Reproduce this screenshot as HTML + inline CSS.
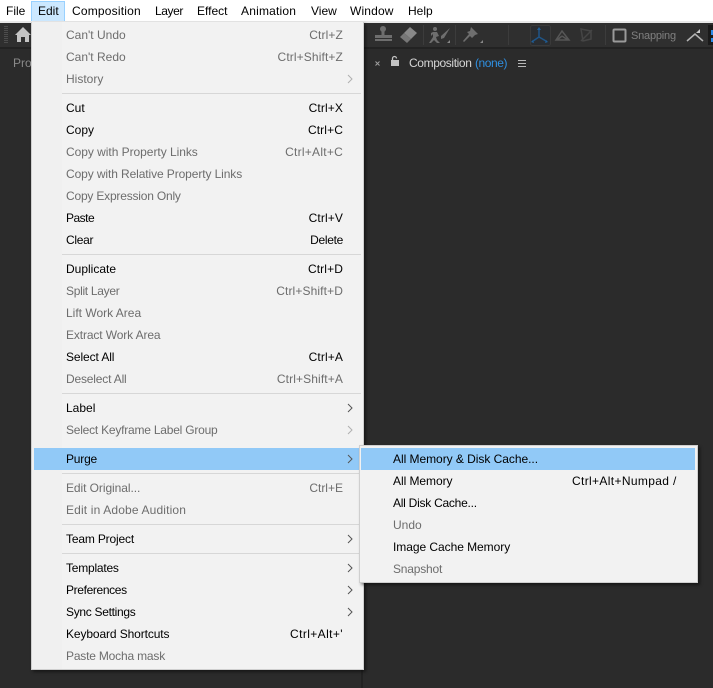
<!DOCTYPE html>
<html><head><meta charset="utf-8">
<style>
*{margin:0;padding:0;box-sizing:border-box}
html,body{width:713px;height:688px;overflow:hidden;background:#2b2b2b;font-family:"Liberation Sans",sans-serif;font-size:12px;color:#000}
.a{position:absolute}
.t{position:absolute;white-space:nowrap;line-height:22px;height:22px}
.r{position:absolute;white-space:nowrap;line-height:22px;height:22px;text-align:right;letter-spacing:.12px}
.d{color:#6d6d6d}
.m{position:absolute;top:0;line-height:22px;height:21px;white-space:nowrap;color:#000}
.sep{position:absolute;left:62px;width:299px;height:1px;background:#d7d7d7}
</style></head><body>
<div class="a" style="left:0;top:0;width:713px;height:21px;background:#fff"></div>
<div class="a" style="left:31px;top:1px;width:34px;height:21px;background:#cce8ff;border:1px solid #99d1ff"></div>
<div class="m" style="left:6px">File</div>
<div class="m" style="left:38px">Edit</div>
<div class="m" style="left:72px;letter-spacing:.2px">Composition</div>
<div class="m" style="left:155px;letter-spacing:-.4px">Layer</div>
<div class="m" style="left:197px">Effect</div>
<div class="m" style="left:241px;letter-spacing:.2px">Animation</div>
<div class="m" style="left:311px">View</div>
<div class="m" style="left:350px;letter-spacing:.15px">Window</div>
<div class="m" style="left:408px">Help</div>

<div class="a" style="left:0;top:21px;width:713px;height:2px;background:#e8e8e8"></div>
<div class="a" style="left:0;top:23px;width:713px;height:24px;background:#2f2f2f"></div>
<div class="a" style="left:0;top:47px;width:713px;height:2px;background:#222"></div>

<svg class="a" style="left:0;top:0" width="713" height="100">
<g fill="#4d4d4d"><rect x="4" y="26" width="4" height="1"/><rect x="4" y="28" width="4" height="1"/><rect x="4" y="30" width="4" height="1"/><rect x="4" y="32" width="4" height="1"/><rect x="4" y="34" width="4" height="1"/><rect x="4" y="36" width="4" height="1"/><rect x="4" y="38" width="4" height="1"/><rect x="4" y="40" width="4" height="1"/><rect x="4" y="42" width="4" height="1"/></g>
<path d="M15 35L23 27L31 35H29V42H25V37H21V42H17V35Z" fill="#c4c4c4"/>
<g fill="#6e6e6e">
<circle cx="383" cy="29" r="3"/>
<rect x="381.500" y="30" width="3" height="6"/>
<rect x="375" y="35" width="17" height="3"/>
<rect x="375" y="39" width="17" height="2"/>
<path d="M410 27L417 33L411 39L404 33Z" fill="#888"/>
<path d="M404 33L411 39L407 43L400 37Z" fill="#777"/>
<circle cx="435" cy="29" r="2"/>
<path d="M433 32L437 32L439 36L436 37L437 40L440 43H437L434 40L431 43H429L433 37V34L431 36V33Z"/>
<path d="M450 28L444 38L441 39L441 36Z"/>
<path d="M471 27L478 34L475 35L472 38L470 36L464 42L463 41L469 34L467 32L470 31Z"/>
<path d="M447 43h3v-3zM480 43h3v-3z" fill="#888"/>
</g>
<rect x="423" y="25" width="1" height="20" fill="#3c3c3c"/>
<rect x="455" y="25" width="1" height="20" fill="#3c3c3c"/>
<rect x="508" y="25" width="1" height="20" fill="#3c3c3c"/>
<rect x="605" y="25" width="1" height="20" fill="#3c3c3c"/>
<rect x="530.500" y="25.500" width="20" height="20" rx="2" fill="#2a2d31" stroke="#3a3a3a"/>
<g stroke="#1f5588" stroke-width="1.500" fill="none"><path d="M539 37V30M539 37L533 41M539 37L546 41"/></g>
<path d="M539 27l-2 3h4zM531 42l3 1-1-3zM548 42l-3 1 1-3z" fill="#1f5f99"/>
<g stroke="#565656" stroke-width="1.500" fill="none"><path d="M562 31L556 40H569ZM562 36L557 40M562 36L568 40"/></g>
<g stroke="#454545" stroke-width="1.500" fill="none"><path d="M581 29L591 31V39L583 41ZM581 41L592 30"/></g>
<rect x="613.500" y="29.500" width="12" height="12" rx="1" fill="none" stroke="#9a9a9a" stroke-width="2"/>
<path d="M687 41L695 34L703 41" stroke="#b4b4b4" stroke-width="1.500" fill="none"/>
<path d="M696 33L700 29V33Z" fill="#c8c8c8"/>
<rect x="708" y="25" width="5" height="20" fill="#1a1a1a"/>
<rect x="711" y="30" width="2" height="5" fill="#2d8ceb"/><rect x="711" y="38" width="2" height="4" fill="#2d8ceb"/>
<path d="M375.500 61.500l4 4M379.500 61.500l-4 4" stroke="#a0a0a0" stroke-width="1" fill="none"/>
<path d="M392.500 60v-1.500a2 2 0 0 1 4 0" stroke="#c4c4c4" stroke-width="1.300" fill="none"/>
<rect x="391" y="60" width="8" height="6" fill="#c4c4c4"/>
<rect x="518" y="60" width="8" height="1" fill="#b8b8b8"/><rect x="518" y="63" width="8" height="1" fill="#b8b8b8"/><rect x="518" y="66" width="8" height="1" fill="#b8b8b8"/>
</svg>

<div class="t" style="left:13px;top:52px;color:#8a8a8a">Project</div>
<div class="t" style="left:409px;top:52px;color:#d6d6d6;letter-spacing:-.38px">Composition</div>
<div class="t" style="left:475px;top:52px;color:#2f8fe0;letter-spacing:-.45px">(none)</div>
<div class="a" style="left:631px;top:23px;line-height:26px;color:#808080;white-space:nowrap;font-size:11px;letter-spacing:-.2px">Snapping</div>

<div class="a" style="left:361px;top:50px;width:2px;height:638px;background:#222"></div>

<!-- Edit menu -->
<div class="a" style="left:31px;top:22px;width:333px;height:648px;background:#f2f2f2;border:1px solid #cfcfcf;border-top:0;box-shadow:2px 2px 3px rgba(0,0,0,.45)"></div>
<div class="a" style="left:32px;top:22px;width:30px;height:647px;background:#f0f0f0"></div>
<div class="sep" style="top:93px"></div>
<div class="sep" style="top:254px"></div>
<div class="sep" style="top:393px"></div>
<div class="sep" style="top:473px"></div>
<div class="sep" style="top:524px"></div>
<div class="sep" style="top:553px"></div>
<div class="a" style="left:34px;top:448px;width:327px;height:22px;background:#91c9f7"></div>

<div class="t d" style="left:66px;top:24px">Can't Undo</div><div class="r d" style="right:370px;top:24px">Ctrl+Z</div>
<div class="t d" style="left:66px;top:46px">Can't Redo</div><div class="r d" style="right:370px;top:46px">Ctrl+Shift+Z</div>
<div class="t d" style="left:66px;top:68px">History</div>
<div class="t" style="left:66px;top:97px">Cut</div><div class="r" style="right:370px;top:97px">Ctrl+X</div>
<div class="t" style="left:66px;top:119px">Copy</div><div class="r" style="right:370px;top:119px">Ctrl+C</div>
<div class="t d" style="left:66px;top:141px;letter-spacing:-.04px">Copy with Property Links</div><div class="r d" style="right:370px;top:141px;letter-spacing:.25px">Ctrl+Alt+C</div>
<div class="t d" style="left:66px;top:163px;letter-spacing:-.1px">Copy with Relative Property Links</div>
<div class="t d" style="left:66px;top:185px;letter-spacing:-.2px">Copy Expression Only</div>
<div class="t" style="left:66px;top:207px;letter-spacing:-.5px">Paste</div><div class="r" style="right:370px;top:207px">Ctrl+V</div>
<div class="t" style="left:66px;top:229px;letter-spacing:-.3px">Clear</div><div class="r" style="right:370px;top:229px;letter-spacing:-.3px">Delete</div>
<div class="t" style="left:66px;top:258px">Duplicate</div><div class="r" style="right:370px;top:258px">Ctrl+D</div>
<div class="t d" style="left:66px;top:280px;letter-spacing:-.3px">Split Layer</div><div class="r d" style="right:370px;top:280px">Ctrl+Shift+D</div>
<div class="t d" style="left:66px;top:302px">Lift Work Area</div>
<div class="t d" style="left:66px;top:324px;letter-spacing:-.12px">Extract Work Area</div>
<div class="t" style="left:66px;top:346px;letter-spacing:-.1px">Select All</div><div class="r" style="right:370px;top:346px">Ctrl+A</div>
<div class="t d" style="left:66px;top:368px;letter-spacing:-.18px">Deselect All</div><div class="r d" style="right:370px;top:368px">Ctrl+Shift+A</div>
<div class="t" style="left:66px;top:397px">Label</div>
<div class="t d" style="left:66px;top:419px;letter-spacing:-.22px">Select Keyframe Label Group</div>
<div class="t" style="left:66px;top:448px;letter-spacing:-.2px">Purge</div>
<div class="t d" style="left:66px;top:477px;letter-spacing:-.07px">Edit Original...</div><div class="r d" style="right:370px;top:477px;letter-spacing:0">Ctrl+E</div>
<div class="t d" style="left:66px;top:499px;letter-spacing:.15px">Edit in Adobe Audition</div>
<div class="t" style="left:66px;top:528px;letter-spacing:-.17px">Team Project</div>
<div class="t" style="left:66px;top:557px;letter-spacing:-.22px">Templates</div>
<div class="t" style="left:66px;top:579px;letter-spacing:-.36px">Preferences</div>
<div class="t" style="left:66px;top:601px;letter-spacing:-.3px">Sync Settings</div>
<div class="t" style="left:66px;top:623px;letter-spacing:-.11px">Keyboard Shortcuts</div><div class="r" style="right:370px;top:623px;letter-spacing:.4px">Ctrl+Alt+'</div>
<div class="t d" style="left:66px;top:645px;letter-spacing:-.19px">Paste Mocha mask</div>

<svg class="a" style="left:0;top:0" width="364" height="688" fill="none">
<g stroke="#b0b0b0"><path d="M348 75l4 4-4 4M348 426l4 4-4 4"/></g>
<g stroke="#555"><path d="M348 404l4 4-4 4M348 455l4 4-4 4M348 535l4 4-4 4M348 564l4 4-4 4M348 586l4 4-4 4M348 608l4 4-4 4"/></g>
</svg>

<!-- Purge submenu -->
<div class="a" style="left:359px;top:445px;width:339px;height:138px;background:#f2f2f2;border:1px solid #cfcfcf;box-shadow:2px 2px 3px rgba(0,0,0,.45)"></div>
<div class="a" style="left:361px;top:448px;width:334px;height:22px;background:#91c9f7"></div>
<div class="t" style="left:393px;top:448px;letter-spacing:-.04px">All Memory &amp; Disk Cache...</div>
<div class="t" style="left:393px;top:470px;letter-spacing:-.05px">All Memory</div>
<div class="t" style="left:572px;top:470px;letter-spacing:.35px">Ctrl+Alt+Numpad /</div>
<div class="t" style="left:393px;top:492px;letter-spacing:-.25px">All Disk Cache...</div>
<div class="t d" style="left:393px;top:514px">Undo</div>
<div class="t" style="left:393px;top:536px;letter-spacing:-.05px">Image Cache Memory</div>
<div class="t d" style="left:393px;top:558px;letter-spacing:-.2px">Snapshot</div>
</body></html>
